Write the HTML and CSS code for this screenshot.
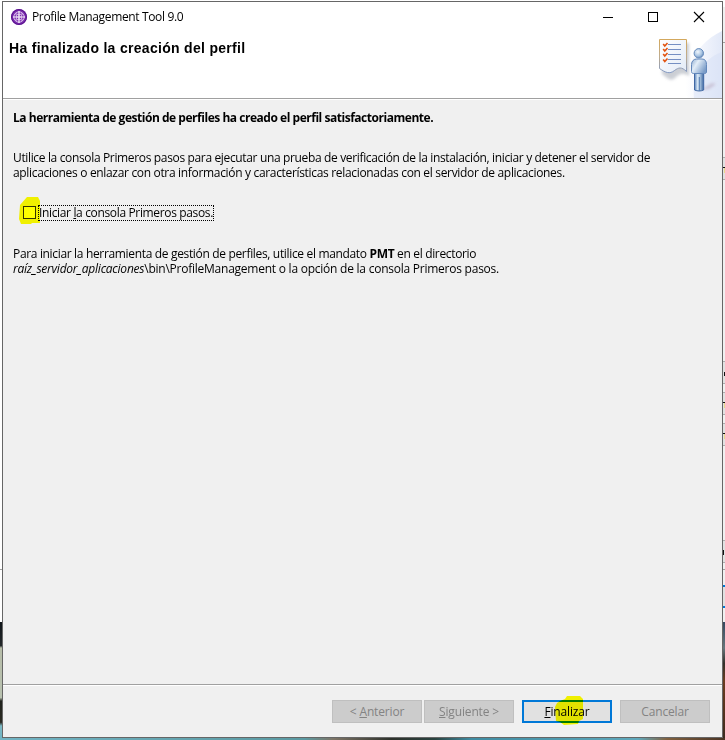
FILE: index.html
```html
<!DOCTYPE html>
<html lang="es">
<head>
<meta charset="utf-8">
<title>Profile Management Tool 9.0</title>
<link rel="stylesheet" href="styles.css">
</head>
<body>
<svg class="desktop" width="725" height="740" viewBox="0 0 725 740" shape-rendering="crispEdges" aria-hidden="true">
  <defs>
    <linearGradient id="dl" x1="0" y1="0" x2="0" y2="1"><stop offset="0" stop-color="#10151a"/><stop offset=".2" stop-color="#23282a"/><stop offset=".22" stop-color="#b7bda9"/><stop offset=".64" stop-color="#b9c2b0"/><stop offset=".67" stop-color="#20221d"/><stop offset=".85" stop-color="#2a2a22"/><stop offset=".88" stop-color="#7db9c4"/><stop offset="1" stop-color="#6db4c4"/></linearGradient>
    <linearGradient id="dr" x1="0" y1="0" x2="0" y2="1"><stop offset="0" stop-color="#35485f"/><stop offset=".22" stop-color="#66757b"/><stop offset=".35" stop-color="#33302a"/><stop offset=".5" stop-color="#6b3c20"/><stop offset=".8" stop-color="#50301d"/><stop offset="1" stop-color="#3a2a20"/></linearGradient>
    <linearGradient id="db" x1="0" y1="0" x2="1" y2="0"><stop offset="0" stop-color="#72b4c4"/><stop offset=".42" stop-color="#5b9aa2"/><stop offset=".46" stop-color="#7d7466"/><stop offset=".54" stop-color="#2c302a"/><stop offset=".6" stop-color="#29423f"/><stop offset=".65" stop-color="#3f8ca2"/><stop offset=".88" stop-color="#60a9bc"/><stop offset=".92" stop-color="#80603e"/><stop offset="1" stop-color="#4a3324"/></linearGradient>
  </defs>
  <rect width="725" height="740" fill="#fff"/>
  <path fill="#f0f0f0" d="M723 7h2v35h-2zM723 43h2v579h-2z"/>
  <path fill="#a0a0a0" d="M723 42h2v1h-2zM0 569h2v1H0zM723 569h2v1h-2z"/>
  <path fill="#adadad" d="M723 157h2v1h-2zM723 179h2v1h-2zM723 361h2v1h-2zM723 383h2v1h-2zM723 392h2v1h-2zM723 414h2v1h-2zM723 423h2v1h-2zM723 445h2v1h-2zM723 540h2v1h-2zM723 562h2v1h-2z"/>
  <path fill="#e1e1e1" d="M723 158h2v21h-2zM723 362h2v21h-2zM723 393h2v21h-2zM723 424h2v21h-2zM723 541h2v21h-2zM723 587h2v19h-2z"/>
  <path fill="#111" d="M723 167h2v1h-2zM724 372h1v4h-1zM723 402h2v1h-2zM723 433h2v1h-2zM723 550h1v5h-1z"/>
  <path fill="#e9d98a" d="M724 168h1v5h-1zM724 403h1v5h-1zM724 434h1v5h-1z"/>
  <path fill="#0078d7" d="M723 585h2v2h-2zM723 606h2v2h-2z"/>
  <rect y="622" width="3" height="118" fill="url(#dl)"/>
  <rect x="722" y="622" width="3" height="118" fill="url(#dr)"/>
  <rect y="738" width="725" height="2" fill="url(#db)"/>
</svg>

<main class="window">
  <header class="banner">
    <div class="titlebar">
      <svg class="app-icon" width="16" height="16" viewBox="0 0 16 16" aria-hidden="true">
        <circle cx="8" cy="8" r="8" fill="#7a2bae"/>
        <circle cx="8" cy="8" r="7.4" fill="none" stroke="#56128a"/>
        <g fill="none" stroke="#dcc2ec" stroke-width=".9"><circle cx="8" cy="8" r="5.200"/><path d="M4.500 4.500Q8 7.500 11.500 4.500M4.500 11.500Q8 8.500 11.500 11.500M4.500 4.500Q7.500 8 4.500 11.500M11.500 4.500Q8.500 8 11.500 11.500"/></g>
        <path d="M8 2v12M2 8h12" stroke="#fff" stroke-width="1.2"/>
      </svg>
      <span class="app-title">Profile Management Tool 9.0</span>
      <svg class="controls" width="103" height="12" viewBox="0 0 103 12" fill="none" stroke="#000" aria-hidden="true">
        <path d="M0 6.5h10M45.500 1.500h9v9h-9z" shape-rendering="crispEdges"/>
        <path d="M91 1l10 10M101 1l-10 10" stroke-width="1.1"/>
      </svg>
    </div>
    <h1 class="heading">Ha finalizado la creación del perfil</h1>
    <svg class="wizard-art" width="72" height="67" viewBox="650 31 72 67" aria-hidden="true">
      <defs>
        <linearGradient id="glow" x1="0" x2="1"><stop offset="0" stop-color="#fff"/><stop offset=".5" stop-color="#f1f4fc"/><stop offset="1" stop-color="#e2e9f8"/></linearGradient>
        <linearGradient id="body" x1="0" x2="1" y2=".6"><stop offset="0" stop-color="#8eacd0"/><stop offset=".4" stop-color="#e3eef8"/><stop offset="1" stop-color="#7b9cc8"/></linearGradient>
        <linearGradient id="legs" x1="0" x2="1"><stop offset="0" stop-color="#5c83b9"/><stop offset=".35" stop-color="#dcebf7"/><stop offset=".55" stop-color="#b5cde5"/><stop offset="1" stop-color="#3d669f"/></linearGradient>
        <linearGradient id="paper" x1="0" y1="0" x2="1" y2="1"><stop offset="0" stop-color="#fff"/><stop offset="1" stop-color="#e3ebf7"/></linearGradient>
        <linearGradient id="edge" x1="0" y1="0" x2="0" y2="1"><stop offset="0" stop-color="#d3a85d"/><stop offset=".5" stop-color="#c0ac8c"/><stop offset="1" stop-color="#8299c4"/></linearGradient>
        <radialGradient id="head" cx=".4" cy=".35" r=".7"><stop offset="0" stop-color="#f1f7fc"/><stop offset=".6" stop-color="#aac5e2"/><stop offset="1" stop-color="#5d83b5"/></radialGradient>
        <filter id="soft" x="-30%" y="-30%" width="160%" height="160%"><feGaussianBlur stdDeviation="1.5"/></filter>
      </defs>
      <path fill="url(#glow)" d="M722 31v67h-35c-6-20 4-52 35-67z"/>
      <path fill="#d5e0f5" opacity=".5" d="M722 52v46h-28c-2-18 6-38 28-46z"/>
      <path fill="#7f8796" opacity=".4" filter="url(#soft)" d="M662 43h27v33c-6-4-10-2-14 2s-8 0-13-4z"/>
      <path fill="#b8a8bd" opacity=".6" filter="url(#soft)" d="M701 90l11-7 4 1-7 5z"/>
      <path fill="url(#paper)" stroke="url(#edge)" d="M659.500 39.500h27v32c-5-5-8-4-12-1-5 4-9 2-15-2z"/>
      <path stroke="#758fc3" d="M668 44.500h13M668 49.500h13M668 54.500h13M668 59.500h13M668 63.500h13"/>
      <path fill="none" stroke="#e25412" stroke-width="1.600" d="M663.200 44l1.600 2 2.700-3M663.200 49l1.600 2 2.700-3M663.200 54l1.600 2 2.700-3M663.200 59.500l1.600 2 2.700-3"/>
      <path fill="url(#legs)" stroke="#4068a4" d="M694.500 73h9.200v17c-3 1.300-6 1.300-9.200 0z"/>
      <path stroke="#527bb1" d="M699.300 77v14"/>
      <path fill="url(#body)" stroke="#6388bb" d="M691.500 71.500v-7c0-3.500 2.500-5.500 5-5.500h5.500c3 0 4.500 2 4.500 5.500v7.500c0 1-1 1.500-2 1.500h-11c-1 0-2-.5-2-2z"/>
      <circle cx="698.800" cy="53.300" r="4.700" fill="url(#head)" stroke="#668bbc"/>
    </svg>
  </header>

  <section class="content">
    <p class="summary"><b class="line l1">La herramienta de gestión de perfiles ha creado el perfil satisfactoriamente.</b></p>
    <p class="info">
      <span class="line l2">Utilice la consola Primeros pasos para ejecutar una prueba de verificación de la instalación, iniciar y detener el servidor de</span>
      <span class="line l3">aplicaciones o enlazar con otra información y características relacionadas con el servidor de aplicaciones.</span>
    </p>
    <div class="option">
      <span class="box"></span><span class="label l4">Iniciar <u>l</u>a consola Primeros pasos.</span>
      <svg class="marker" width="24" height="30" viewBox="18 195 24 30" aria-hidden="true"><path fill="#ff0" d="M27 197h11l2 4v22h-8l-1 1h-10l-2-5 1-14z"/></svg>
    </div>
    <p class="hint">
      <span class="line l5">Para iniciar la herramienta de gestión de perfiles, utilice el mandato <b>PMT</b> en el directorio</span>
      <span class="line l6"><i>raíz_servidor_aplicaciones</i>\bin\ProfileManagement o la opción de la consola Primeros pasos.</span>
    </p>
  </section>

  <footer class="actions">
    <span class="button disabled"><span>&lt; <u>A</u>nterior</span></span>
    <span class="button disabled"><span><u>S</u>iguiente &gt;</span></span>
    <span class="button primary"><span><u>F</u>inalizar</span>
      <svg class="marker" width="28" height="31" viewBox="555 695 28 31" aria-hidden="true"><path fill="#ff0" d="M567 696h13l3 3v20l-4 2-1 3-14 1-4-3-4-1-1-14 2-4 3-2 5-2z"/></svg>
    </span>
    <span class="button disabled"><span>Cancelar</span></span>
  </footer>
</main>
</body>
</html>
```
FILE: styles.css
```css
* { box-sizing: border-box; }
body {
  margin: 0;
  width: 725px;
  height: 740px;
  padding: 1px 2px 2px;
  overflow: hidden;
  position: relative;
  font: 12px/15px "Open Sans", "Noto Sans", sans-serif;
  color: #000;
}
p, h1 { margin: 0; }
.desktop { position: absolute; left: 0; top: 0; }

.window {
  position: relative;
  display: flex;
  flex-direction: column;
  width: 721px;
  height: 737px;
  border: 1px solid #666;
  background: #f0f0f0;
}
.banner {
  position: relative;
  height: 98px;
  flex: none;
  background: #fff;
  border-bottom: 1px solid #fff;
  box-shadow: inset 0 -1px #a0a0a0;
}
.titlebar {
  display: flex;
  align-items: center;
  height: 29px;
  padding-left: 8px;
}
.app-icon { flex: none; margin-right: 5px; }
.app-title { white-space: nowrap; letter-spacing: -0.35px; }
.controls { margin-left: auto; margin-right: 16px; }
.heading {
  margin: 9px 0 0 6px;
  font: bold 14px/17px "Liberation Sans", sans-serif;
  letter-spacing: 0.3px;
  white-space: nowrap;
}
.wizard-art { position: absolute; right: 0; top: 29px; height: 67px; }

.content { flex: 1; padding: 10px 10px 0; }
.line { display: block; width: max-content; white-space: nowrap; }
.info { margin-top: 25px; }
.option {
  position: relative;
  display: flex;
  align-items: center;
  height: 17px;
  margin: 24px 0 0 10px;
}
.box { width: 13px; height: 13px; border: 1px solid #333; background: #fff; }
.label {
  height: 16px;
  margin-left: 2px;
  border: 1px dotted #000;
  width: 176px;
  line-height: 13px;
  white-space: nowrap;
}
.marker { position: absolute; mix-blend-mode: multiply; }
.option .marker { left: -5px; top: -9px; }
.hint { margin-top: 25px; }
u { text-decoration: underline; text-decoration-thickness: 1px; text-underline-offset: 1px; text-decoration-skip-ink: none; }
.l1 { letter-spacing: -0.47px; }
.l2 { letter-spacing: -0.348px; }
.l3 { letter-spacing: -0.325px; }
.l4 { letter-spacing: -0.35px; }
.l5 { letter-spacing: -0.335px; }
.l6 { letter-spacing: -0.24px; }

.actions {
  display: flex;
  height: 53px;
  flex: none;
  padding: 15px 12px 0 0;
  justify-content: flex-end;
  border-top: 1px solid #a0a0a0;
  box-shadow: inset 0 1px #fff;
}
.button {
  position: relative;
  width: 90px;
  height: 23px;
  display: flex;
  align-items: center;
  justify-content: center;
  white-space: nowrap;
  margin-left: 8px;
  letter-spacing: -0.15px;
}
.button:nth-child(2) { margin-left: 2px; }
.disabled { background: #ccc; border: 1px solid #bfbfbf; color: #838383; }
.primary { background: #e1e1e1; border: 2px solid #0078d7; }
.primary .marker { left: 31px; top: -7px; }
```
